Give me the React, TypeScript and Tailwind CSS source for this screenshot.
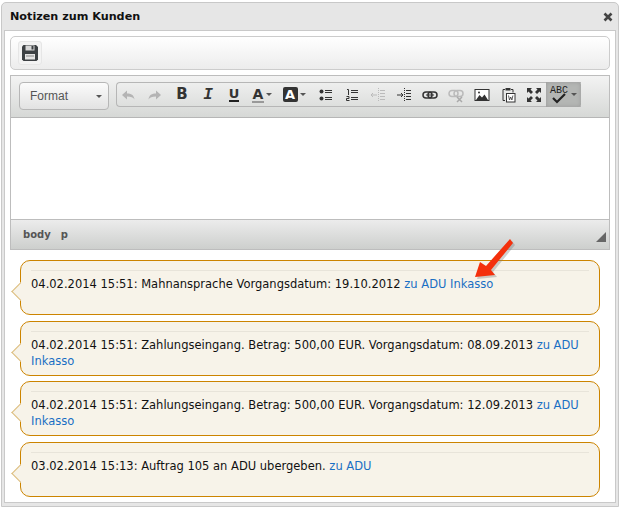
import type { ReactNode } from "react";

const font = { fontFamily: '"DejaVu Sans", Verdana, sans-serif' };

const notes = [
  { text: "04.02.2014 15:51: Mahnansprache Vorgangsdatum: 19.10.2012 ", link: "zu ADU Inkasso" },
  { text: "04.02.2014 15:51: Zahlungseingang. Betrag: 500,00 EUR. Vorgangsdatum: 08.09.2013 ", link: "zu ADU Inkasso" },
  { text: "04.02.2014 15:51: Zahlungseingang. Betrag: 500,00 EUR. Vorgangsdatum: 12.09.2013 ", link: "zu ADU Inkasso" },
  { text: "03.02.2014 15:13: Auftrag 105 an ADU ubergeben. ", link: "zu ADU" },
];

function Svg({ children }: { children: ReactNode }) {
  return (
    <svg width="16" height="16" viewBox="0 0 16 16" className="block">
      {children}
    </svg>
  );
}

function Btn({ children, w = 26, ml = 0 }: { children: ReactNode; w?: number; ml?: number }) {
  return (
    <div className="flex h-full shrink-0 items-center justify-center" style={{ width: w, marginLeft: ml }}>
      {children}
    </div>
  );
}

function Caret() {
  return <span className="ml-[2px] h-0 w-0 border-x-[3px] border-t-[3px] border-x-transparent border-t-[#555]" />;
}

function Indent({ color, out }: { color: string; out?: boolean }) {
  return (
    <Svg>
      <path d="M8.500 1v14" stroke={color} strokeDasharray="1 1" />
      <path d="M10 3.500h5M10 6.500h5M10 9.500h5M10 12.500h5" stroke={color} />
      <path d={out ? "M1 8h6M1 8l2-2M1 8l2 2" : "M1 8h6M7 8l-2-2M7 8l-2 2"} stroke={color} fill="none" />
    </Svg>
  );
}

function Toolbar() {
  return (
    <div className="flex h-[25px] w-[465px] items-center rounded-l-[4px] border border-r-0 border-[#b6b6b6] pl-[1px]">
      <Btn w={20}>
        <Svg>
          <path d="M2 8 7 3.500V6.500C11 6.500 14 8 14.500 12.500 13 10.200 11 9.500 7 9.500V12.500Z" fill="#b4b4b4" />
        </Svg>
      </Btn>
      <Btn ml={4}>
        <Svg>
          <path d="M14 8 9 3.500V6.500C5 6.500 2 8 1.500 12.500 3 10.200 5 9.500 9 9.500V12.500Z" fill="#b4b4b4" />
        </Svg>
      </Btn>
      <Btn ml={1}><span className="text-[15px] leading-none font-bold text-[#333]">B</span></Btn>
      <Btn><span className="font-['Liberation_Mono'] text-[16px] leading-none font-bold text-[#333] italic">I</span></Btn>
      <Btn><span className="border-b-[2px] border-[#222] text-[13px] leading-[13px] font-bold text-[#333]">U</span></Btn>
      <Btn w={30}>
        <span className="border-b-[2px] border-[#999] px-[1px] text-[14px] leading-[14px] font-bold text-[#333]">A</span>
        <Caret />
      </Btn>
      <Btn w={34}>
        <span className="flex h-[15px] w-[15px] items-center justify-center rounded-[2px] bg-[#333] text-[13px] leading-none font-bold text-white">A</span>
        <Caret />
      </Btn>
      <Btn ml={2}>
        <Svg>
          <circle cx="3.500" cy="4.500" r="2" fill="#333" /><circle cx="3.500" cy="11.500" r="2" fill="#333" />
          <path d="M7 3.500h7M7 5.500h7M7 10.500h7M7 12.500h7" stroke="#333" />
        </Svg>
      </Btn>
      <Btn>
        <Svg>
          <path d="M3 2.500h1.500V8M2.500 9.500h2.500v2h-2.500v2h3M7 3.500h7M7 5.500h7M7 10.500h7M7 12.500h7" stroke="#333" fill="none" />
        </Svg>
      </Btn>
      <Btn><Indent color="#bbb" out /></Btn>
      <Btn><Indent color="#333" /></Btn>
      <Btn>
        <Svg>
          <rect x="1" y="5" width="9" height="6" rx="3" fill="none" stroke="#333" strokeWidth="1.500" />
          <rect x="6" y="5" width="9" height="6" rx="3" fill="none" stroke="#333" strokeWidth="1.500" />
          <path d="M4 8h8" stroke="#333" />
        </Svg>
      </Btn>
      <Btn>
        <Svg>
          <rect x="1" y="3.500" width="9" height="6" rx="3" fill="none" stroke="#bbb" strokeWidth="1.500" />
          <rect x="6" y="3.500" width="9" height="6" rx="3" fill="none" stroke="#bbb" strokeWidth="1.500" />
          <path d="M9 10l5 5M14 10l-5 5" stroke="#aaa" strokeWidth="1.500" />
        </Svg>
      </Btn>
      <Btn>
        <Svg>
          <rect x="1" y="2.500" width="14" height="11" fill="#fff" stroke="#333" />
          <path d="M2 13l3.500-5 2.500 2.500 2.500-3 3.500 5.500Z" fill="#333" />
          <circle cx="5" cy="5.500" r="1" fill="#333" />
        </Svg>
      </Btn>
      <Btn>
        <Svg>
          <path d="M5 2.500H3v11h2M11 2.500h2v3" fill="none" stroke="#333" />
          <rect x="5.500" y="1" width="5" height="2.500" fill="#333" />
          <rect x="6.500" y="6.500" width="8.500" height="8.500" fill="#fff" stroke="#333" />
          <path d="M8.500 8.500l1 4.500 1.200-3 1.200 3 1-4.500" fill="none" stroke="#333" strokeWidth="0.800" />
        </Svg>
      </Btn>
      <Btn w={25}>
        <Svg>
          <path d="M1 1h5L4.500 2.500 7 5 5 7 2.500 4.500 1 6ZM15 1v5l-1.500-1.500L11 7 9 5l2.500-2.500L10 1ZM1 15v-5l1.500 1.500L5 9l2 2-2.500 2.500L6 15ZM15 15h-5l1.500-1.500L9 11l2-2 2.500 2.500L15 10Z" fill="#333" />
        </Svg>
      </Btn>
      <div className="flex h-[25px] w-[35px] items-center justify-center rounded-r-[3px] bg-[#b4b6b4] shadow-[inset_0_0_4px_#999]">
        <div className="relative h-[20px] w-[19px]">
          <span className="absolute top-[1px] left-0 font-['Liberation_Mono'] text-[10px] leading-none text-[#222]">ABC</span>
          <svg width="19" height="20" viewBox="0 0 19 20" className="absolute top-0 left-0">
            <path d="M3 13l4 4 8-8" fill="none" stroke="#222" strokeWidth="2.200" />
          </svg>
        </div>
        <Caret />
      </div>
    </div>
  );
}

export default function App() {
  return (
    <div className="relative h-[508px] w-[620px] bg-white pt-[2px] pl-[1px]" style={font}>
      <div className="flex h-[505px] w-[618px] flex-col rounded-t-[5px] border border-[#c8c8c8] bg-[#e6e6e6]">
        <div className="flex h-[27px] shrink-0 items-center justify-between pr-[5px] pl-[8px]">
          <span className="mt-[2px] text-[11.200px] font-bold text-[#111]">Notizen zum Kunden</span>
          <svg width="10" height="10" viewBox="0 0 10 10" className="block">
            <path d="M1.500 1.500l7 7M8.500 1.500l-7 7" stroke="#444" strokeWidth="2.600" />
          </svg>
        </div>
        <div className="mr-[2px] ml-[2px] flex h-[473px] flex-col border border-[#c9c9c9] bg-white px-[5px] pt-[5px]">
          <div className="flex h-[34px] shrink-0 items-center rounded-[5px] border border-[#ccc] bg-gradient-to-b from-white to-[#ececec] pl-[7px]">
            <div className="flex h-[24px] w-[24px] items-center justify-center rounded-[3px] border border-[#e6e6e6] bg-[#f3f3f3]">
              <svg width="16" height="16" viewBox="0 0 16 16" className="block">
                <path d="M0 1.500 1.500 0H14l2 2v12.500L14.500 16h-13L0 14.500Z" fill="#3c4043" />
                <rect x="3.500" y="0.500" width="9" height="5" fill="#d8d8d8" />
                <rect x="9.500" y="1" width="2" height="3.500" fill="#3c4043" />
                <rect x="3" y="9" width="10" height="5.500" fill="#e4e4e4" />
                <rect x="4" y="10.500" width="8" height="1" fill="#888" />
              </svg>
            </div>
          </div>
          <div className="mt-[5px] flex h-[175px] shrink-0 flex-col border border-[#bdbdbd]">
            <div className="flex h-[42px] shrink-0 items-start gap-[7px] border-b border-[#b6b6b6] bg-gradient-to-b from-[#f3f3f3] to-[#d6d8d6] pt-[6px] pl-[8px]">
              <div className="flex h-[28px] w-[90px] items-center justify-between rounded-[4px] border border-[#b6b6b6] bg-gradient-to-b from-[#fbfbfb] to-[#e2e2e2] pr-[6px] pl-[10px]">
                <span className="font-['Liberation_Sans'] text-[12px] text-[#555]">Format</span>
                <Caret />
              </div>
              <Toolbar />
            </div>
            <div className="grow bg-white" />
            <div className="relative flex h-[30px] shrink-0 items-center gap-[10px] border-t border-[#bdbdbd] bg-gradient-to-b from-[#ececec] to-[#cdcfcd] pl-[12px] text-[10px] font-bold text-[#555]">
              <span>body</span>
              <span>p</span>
              <span className="absolute right-[3px] bottom-[7px] h-0 w-0 border-b-[10px] border-l-[10px] border-b-[#666] border-l-transparent" />
            </div>
          </div>
          <div className="mt-[10px] flex flex-col gap-[5.670px] px-[10px]">
            {notes.map((n, i) => (
              <div key={i} className="relative h-[55px] rounded-[10px] border border-[#cc8400] bg-[#f7f3e9] px-[10px] pt-[9px]">
                <span className="absolute top-[24px] left-[-7px] h-[13px] w-[13px] rotate-45 border-b border-l border-[#dcbc7c] bg-[#f7f3e9]" />
                <div className="relative border-t border-[#e8e4da] pt-[5px] text-[11.500px] leading-[16px] text-[#111]">
                  {n.text}
                  <span className="text-[#1a6fc4]">{n.link}</span>
                </div>
              </div>
            ))}
          </div>
        </div>
      </div>
      <svg width="50" height="50" viewBox="0 0 50 50" className="absolute top-[235px] left-[470px]">
        <path d="M5 42 10 27l6 4L40 4l3 4-22 27 4 5Z" fill="#777" opacity="0.35" transform="translate(2 2)" />
        <path d="M5 42 10 27l6 4L40 4l3 4-22 27 4 5Z" fill="#f4300c" />
      </svg>
    </div>
  );
}
